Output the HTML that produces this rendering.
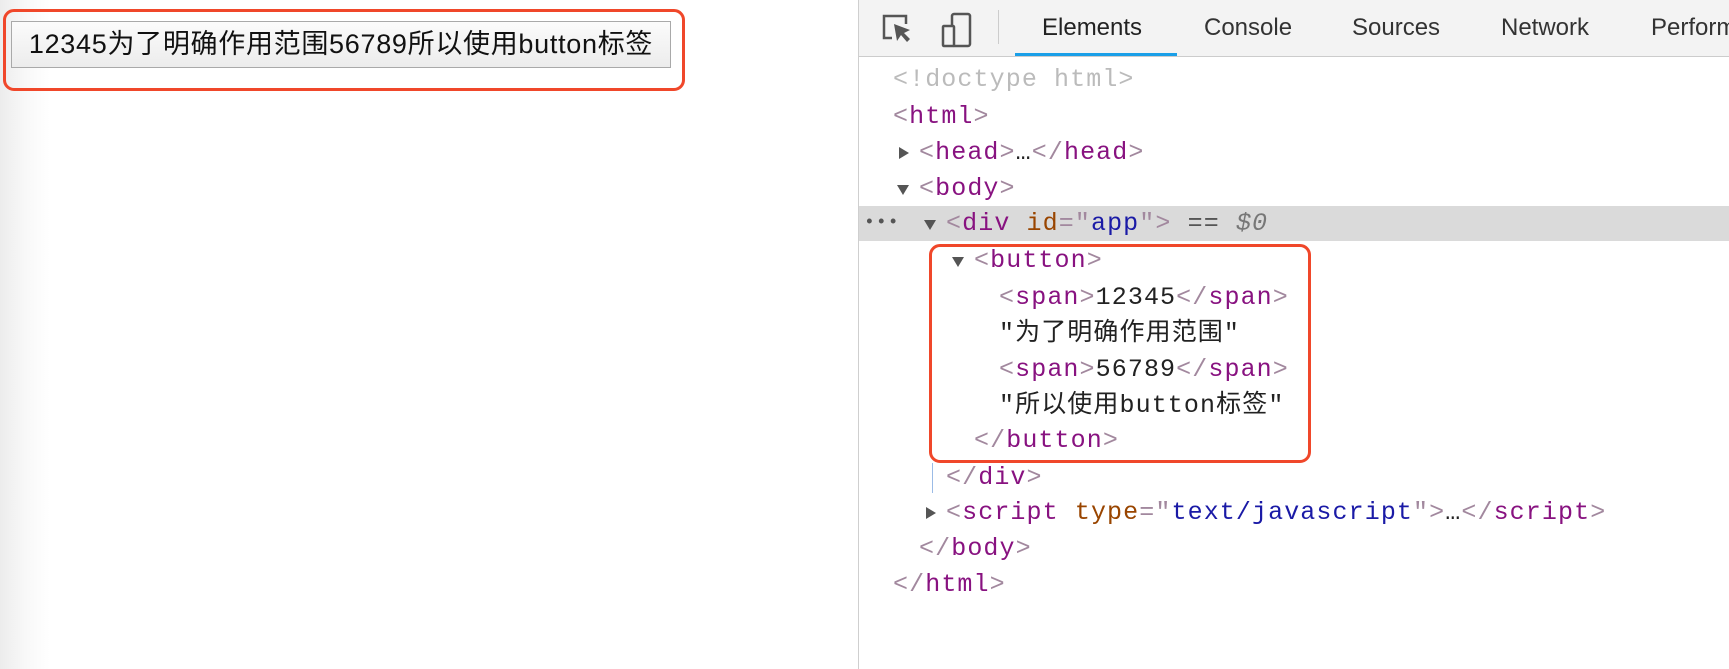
<!DOCTYPE html>
<html><head><meta charset="utf-8"><style>
html,body{margin:0;padding:0;width:1729px;height:669px;overflow:hidden;background:#fff;position:relative;font-family:"Liberation Sans","Noto Sans CJK SC",sans-serif}
.left{position:absolute;left:0;top:0;width:858px;height:669px;background:linear-gradient(90deg,#ececec 0,#f8f8f8 25px,#fff 50px)}
.divider{position:absolute;left:858px;top:0;width:1px;height:669px;background:#cfcfcf}
.btn{position:absolute;left:11px;top:21px;border:1px solid #a9a9a9;background:linear-gradient(#fbfbfb,#ececec);font-size:27px;line-height:45px;text-align:center;color:#111;box-sizing:border-box;width:660px;height:47px;white-space:nowrap;letter-spacing:0.7px}
.red{position:absolute;border:3px solid #f0472a;border-radius:11px;box-sizing:border-box}
.tb{position:absolute;left:859px;top:0;width:870px;height:56px;background:#f3f3f3;border-bottom:1px solid #cccccc}
.tab{position:absolute;top:14px;font-size:24px;color:#333}
.ul{position:absolute;left:1015px;top:53px;width:162px;height:3px;background:#1a9fe8}
.row{position:absolute;font-family:"Liberation Mono","Noto Sans CJK SC",monospace;font-size:25px;letter-spacing:1.1px;line-height:34px;white-space:pre;color:#222}
.t{color:#881280}.b{color:#a2889e}.an{color:#994500}.av{color:#1a1aa6}.g{color:#bbb}
.tri{position:absolute;width:0;height:0}
.down{border-left:6px solid transparent;border-right:6px solid transparent;border-top:10px solid #555}
.right{border-top:6px solid transparent;border-bottom:6px solid transparent;border-left:10px solid #555}
</style></head><body>
<div class="left"></div>
<div class="divider"></div>
<div class="btn">12345为了明确作用范围56789所以使用button标签</div>
<div class="red" style="left:3px;top:9px;width:682px;height:82px"></div>

<div class="tb"></div>
<svg style="position:absolute;left:880px;top:12px" width="36" height="34" viewBox="0 0 36 34"><path d="M12 26H4V4h22v8" fill="none" stroke="#555" stroke-width="2.5"/><path d="M14 12l3 17 4-6 6 7 3-3-6-6 6-3z" fill="#555"/></svg>
<svg style="position:absolute;left:940px;top:12px" width="34" height="36" viewBox="0 0 34 36"><rect x="12" y="2" width="18" height="32" rx="2" fill="none" stroke="#555" stroke-width="2.5"/><rect x="3" y="14" width="11" height="20" rx="1" fill="#f3f3f3" stroke="#555" stroke-width="2.5"/></svg>
<div style="position:absolute;left:998px;top:10px;width:1px;height:34px;background:#ccc"></div>
<div class="tab" style="left:1042px;color:#222">Elements</div>
<div class="tab" style="left:1204px">Console</div>
<div class="tab" style="left:1352px">Sources</div>
<div class="tab" style="left:1501px">Network</div>
<div class="tab" style="left:1651px">Performance</div>
<div class="ul"></div>

<div style="position:absolute;left:859px;top:206px;width:870px;height:35px;background:#dadada"></div>
<div class="row" style="left:864px;top:206px;color:#555;font-size:18px">•••</div>
<div style="position:absolute;left:932px;top:463px;width:1px;height:30px;background:#9bbbe6"></div>

<div class="row" style="left:893px;top:63px"><span class="g">&lt;!doctype html&gt;</span></div>
<div class="row" style="left:893px;top:100px"><span class="b">&lt;</span><span class="t">html</span><span class="b">&gt;</span></div>
<div class="tri right" style="left:899px;top:147px"></div>
<div class="row" style="left:919px;top:136px"><span class="b">&lt;</span><span class="t">head</span><span class="b">&gt;</span>…<span class="b">&lt;/</span><span class="t">head</span><span class="b">&gt;</span></div>
<div class="tri down" style="left:897px;top:185px"></div>
<div class="row" style="left:919px;top:172px"><span class="b">&lt;</span><span class="t">body</span><span class="b">&gt;</span></div>
<div class="tri down" style="left:924px;top:220px"></div>
<div class="row" style="left:946px;top:207px"><span class="b">&lt;</span><span class="t">div</span> <span class="an">id</span><span class="b">="</span><span class="av">app</span><span class="b">"&gt;</span> <span style="color:#555">==</span> <span style="color:#777;font-style:italic">$0</span></div>
<div class="tri down" style="left:952px;top:257px"></div>
<div class="row" style="left:974px;top:244px"><span class="b">&lt;</span><span class="t">button</span><span class="b">&gt;</span></div>
<div class="row" style="left:999px;top:281px"><span class="b">&lt;</span><span class="t">span</span><span class="b">&gt;</span>12345<span class="b">&lt;/</span><span class="t">span</span><span class="b">&gt;</span></div>
<div class="row" style="left:999px;top:317px">"为了明确作用范围"</div>
<div class="row" style="left:999px;top:353px"><span class="b">&lt;</span><span class="t">span</span><span class="b">&gt;</span>56789<span class="b">&lt;/</span><span class="t">span</span><span class="b">&gt;</span></div>
<div class="row" style="left:999px;top:389px">"所以使用button标签"</div>
<div class="row" style="left:974px;top:424px"><span class="b">&lt;/</span><span class="t">button</span><span class="b">&gt;</span></div>
<div class="row" style="left:946px;top:461px"><span class="b">&lt;/</span><span class="t">div</span><span class="b">&gt;</span></div>
<div class="tri right" style="left:926px;top:507px"></div>
<div class="row" style="left:946px;top:496px"><span class="b">&lt;</span><span class="t">script</span> <span class="an">type</span><span class="b">="</span><span class="av">text/javascript</span><span class="b">"&gt;</span>…<span class="b">&lt;/</span><span class="t">script</span><span class="b">&gt;</span></div>
<div class="row" style="left:919px;top:532px"><span class="b">&lt;/</span><span class="t">body</span><span class="b">&gt;</span></div>
<div class="row" style="left:893px;top:568px"><span class="b">&lt;/</span><span class="t">html</span><span class="b">&gt;</span></div>

<div class="red" style="left:929px;top:244px;width:382px;height:219px"></div>
</body></html>
